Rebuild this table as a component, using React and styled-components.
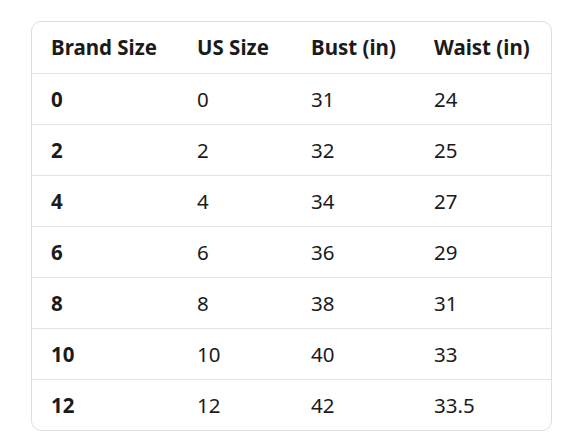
import React from "react";
import styled, { createGlobalStyle } from "styled-components";

const GlobalStyle = createGlobalStyle`
  html, body {
    margin: 0;
    padding: 0;
    background: #ffffff;
  }
  body {
    font-family: "Noto Sans", "Open Sans", sans-serif;
    color: #1b1b1b;
  }
`;

const Page = styled.div`
  padding: 21px 0 0 31px;
`;

const Card = styled.div`
  width: 521px;
  box-sizing: border-box;
  border: 1px solid #dedede;
  border-radius: 10px;
  overflow: hidden;
`;

const Table = styled.table`
  width: 100%;
  border-collapse: collapse;
  table-layout: fixed;
  font-size: 20.5px;
`;

const Col = styled.col`
  width: ${(p) => p.$w}px;
`;

const Row = styled.tr`
  height: 51px;
  border-bottom: ${(p) => (p.$last ? "none" : "1px solid #e3e3e3")};
`;

const Head = styled.th`
  text-align: left;
  font-weight: 700;
  padding: 0 0 0 19px;
  white-space: nowrap;
`;

const Cell = styled.td`
  padding: 0 0 0 19px;
  font-weight: ${(p) => (p.$bold ? 700 : 400)};
  white-space: nowrap;
`;

const headers = ["Brand Size", "US Size", "Bust (in)", "Waist (in)"];
const rows = [
  ["0", "0", "31", "24"],
  ["2", "2", "32", "25"],
  ["4", "4", "34", "27"],
  ["6", "6", "36", "29"],
  ["8", "8", "38", "31"],
  ["10", "10", "40", "33"],
  ["12", "12", "42", "33.5"],
];

export default function App() {
  return (
    <>
      <GlobalStyle />
      <Page>
        <Card>
          <Table>
            <colgroup>
              <Col $w={146} />
              <Col $w={114} />
              <Col $w={123} />
              <Col $w={136} />
            </colgroup>
            <thead>
              <Row>
                {headers.map((h) => (
                  <Head key={h}>{h}</Head>
                ))}
              </Row>
            </thead>
            <tbody>
              {rows.map((r, i) => (
                <Row key={r[0]} $last={i === rows.length - 1}>
                  {r.map((c, j) => (
                    <Cell key={j} $bold={j === 0}>
                      {c}
                    </Cell>
                  ))}
                </Row>
              ))}
            </tbody>
          </Table>
        </Card>
      </Page>
    </>
  );
}
